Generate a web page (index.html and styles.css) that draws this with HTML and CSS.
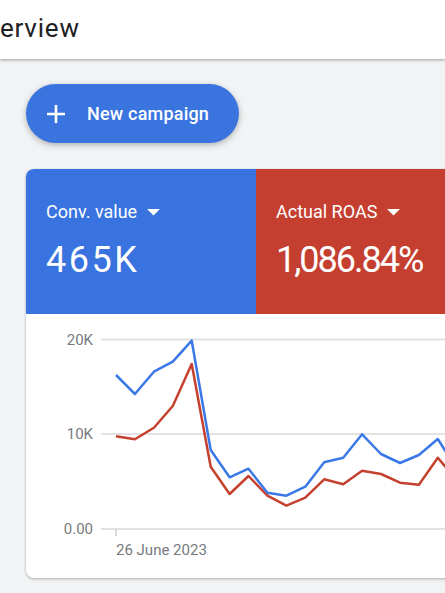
FILE: index.html
```html
<!DOCTYPE html>
<html lang="en">
<head>
<meta charset="utf-8">
<title>Overview</title>
<link rel="stylesheet" href="styles.css">
</head>
<body>
<header class="topbar">
  <h1 class="title">Overview</h1>
</header>
<main class="content">
  <button class="new-btn" type="button">
    <svg class="plus" width="20" height="20" viewBox="0 0 20 20" aria-hidden="true"><path d="M10 1v18M1 10h18" stroke="#fff" stroke-width="2.6" fill="none"/></svg>
    <span>New campaign</span>
  </button>
  <section class="card">
    <div class="metrics">
      <div class="metric metric--blue">
        <div class="metric-label">Conv. value <svg class="caret" width="13" height="7" viewBox="0 0 13 7"><path d="M0 0h13L6.5 6.5z" fill="#fff"/></svg></div>
        <div class="metric-value">465K</div>
      </div>
      <div class="metric metric--red">
        <div class="metric-label">Actual ROAS <svg class="caret" width="13" height="7" viewBox="0 0 13 7"><path d="M0 0h13L6.5 6.5z" fill="#fff"/></svg></div>
        <div class="metric-value metric-value--tight">1,086.84%</div>
      </div>
    </div>
    <svg class="chart" width="440" height="264" viewBox="0 0 440 264">
      <g class="grid">
        <line x1="75" y1="25.5" x2="440" y2="25.5"/>
        <line x1="75" y1="120" x2="440" y2="120"/>
        <line x1="75" y1="215" x2="440" y2="215"/>
      </g>
      <g class="axis-label">
        <text x="67" y="30.5" text-anchor="end">20K</text>
        <text x="67" y="125" text-anchor="end">10K</text>
        <text x="67" y="220" text-anchor="end">0.00</text>
        <text x="90" y="241">26 June 2023</text>
      </g>
      <line class="tick" x1="90" y1="215" x2="90" y2="222"/>
      <polyline class="series series--red" points="90,122.3 108.9,125.3 127.9,113.7 146.8,92 165.7,50 184.7,152.7 203.6,180 222.5,162 241.4,181.7 260.4,191.7 279.3,183.7 298.2,165.3 317.2,170.3 336.1,156.7 355,160 374,168.7 392.9,170.7 411.8,143.7 430.7,166"/>
      <polyline class="series series--blue" points="90,61 108.9,80 127.9,57.7 146.8,47.7 165.7,26.7 184.7,136 203.6,163.3 222.5,154.7 241.4,178.7 260.4,181.7 279.3,172.7 298.2,148.3 317.2,143.7 336.1,120.3 355,140 374,149 392.9,141 411.8,125 430.7,155"/>
    </svg>
  </section>
</main>
</body>
</html>
```
FILE: styles.css
```css
* { box-sizing: border-box; }
html, body {
  margin: 0;
  padding: 0;
  width: 445px;
  height: 593px;
  overflow: hidden;
  background: #f1f3f4;
  font-family: Roboto, "Liberation Sans", sans-serif;
}
.topbar {
  height: 59px;
  background: #fff;
  box-shadow: 0 1px 3px rgba(0,0,0,0.35);
  position: relative;
  z-index: 1;
}
.title {
  margin: 0 0 0 -32px;
  font-size: 26px;
  font-weight: 400;
  line-height: 56px;
  color: #202124;
  letter-spacing: 0.8px;
  white-space: nowrap;
}
.content {
  padding: 25px 0 0 26px;
}
.new-btn {
  display: flex;
  align-items: center;
  gap: 21px;
  width: 213px;
  height: 59px;
  padding: 0 0 0 20px;
  border: none;
  border-radius: 30px;
  background: #3a74df;
  color: #fff;
  font-family: Roboto, "Liberation Sans", sans-serif;
  font-size: 18px;
  font-weight: 500;
  letter-spacing: 0.2px;
  box-shadow: 0 2px 6px rgba(0,0,0,0.28);
}
.plus { display: block; flex: none; }
.card {
  margin-top: 26px;
  width: 470px;
  background: #fff;
  border-radius: 8px;
  overflow: hidden;
  box-shadow: 0 1px 3px rgba(0,0,0,0.3);
}
.metrics {
  display: flex;
  height: 145px;
}
.metric {
  width: 230px;
  flex: none;
  padding: 32px 0 0 20px;
  color: #fff;
}
.metric--blue { background: #3873df; }
.metric--red { background: #c53f31; }
.metric-label {
  display: flex;
  align-items: center;
  gap: 10px;
  font-size: 18px;
  line-height: 22px;
}
.caret { display: block; margin-top: 1px; }
.metric-value {
  margin-top: 17px;
  font-size: 36px;
  line-height: 40px;
  letter-spacing: 2.5px;
}
.metric-value--tight { letter-spacing: -2px; }
.chart { display: block; }
.grid line { stroke: #e2e2e2; stroke-width: 2; }
.axis-label text {
  font-family: Roboto, "Liberation Sans", sans-serif;
  font-size: 15px;
  fill: #777a7e;
}
.tick { stroke: #cfcfcf; stroke-width: 1.5; }
.series { fill: none; stroke-width: 2.5; stroke-linejoin: round; }
.series--blue { stroke: #3b78e7; }
.series--red { stroke: #c5412f; }
```
